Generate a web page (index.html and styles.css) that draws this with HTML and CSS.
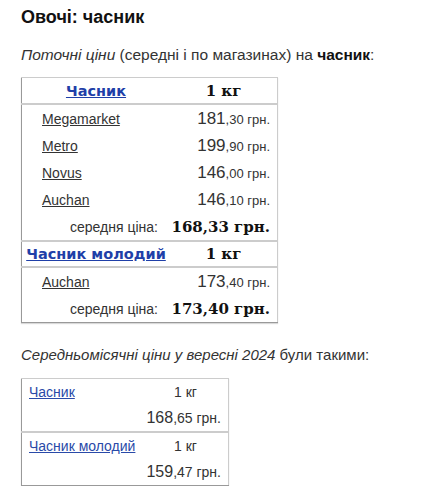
FILE: index.html
```html
<!DOCTYPE html>
<html lang="uk">
<head>
<meta charset="utf-8">
<link rel="stylesheet" href="styles.css">
</head>
<body>
<div class="page">
  <h1 class="title">Овочі: часник</h1>
  <p class="intro"><em>Поточні ціни</em> (середні і по магазинах) на <strong>часник</strong>:</p>
  <table class="prices">
    <tbody>
      <tr class="group">
        <th class="g-name"><a href="#">Часник</a></th>
        <th class="g-unit">1 кг</th>
      </tr>
      <tr class="shop"><td class="s-name"><a href="#">Megamarket</a></td><td class="s-price"><span class="int">181</span>,30 грн.</td></tr>
      <tr class="shop"><td class="s-name"><a href="#">Metro</a></td><td class="s-price"><span class="int">199</span>,90 грн.</td></tr>
      <tr class="shop"><td class="s-name"><a href="#">Novus</a></td><td class="s-price"><span class="int">146</span>,00 грн.</td></tr>
      <tr class="shop"><td class="s-name"><a href="#">Auchan</a></td><td class="s-price"><span class="int">146</span>,10 грн.</td></tr>
      <tr class="avg"><td class="a-label">середня ціна:</td><td class="a-price">168,33 грн.</td></tr>
      <tr class="group sep">
        <th class="g-name"><a href="#">Часник молодий</a></th>
        <th class="g-unit">1 кг</th>
      </tr>
      <tr class="shop"><td class="s-name"><a href="#">Auchan</a></td><td class="s-price"><span class="int">173</span>,40 грн.</td></tr>
      <tr class="avg"><td class="a-label">середня ціна:</td><td class="a-price">173,40 грн.</td></tr>
    </tbody>
  </table>
  <p class="intro second"><em>Середньомісячні ціни у вересні 2024</em> були такими:</p>
  <table class="monthly">
    <tbody>
      <tr class="m-top"><td class="m-name"><a href="#">Часник</a></td><td class="m-unit">1 кг</td></tr>
      <tr class="m-bottom"><td></td><td class="m-price"><span class="int">168</span>,65 грн.</td></tr>
      <tr class="m-top sep"><td class="m-name"><a href="#">Часник молодий</a></td><td class="m-unit">1 кг</td></tr>
      <tr class="m-bottom"><td></td><td class="m-price"><span class="int">159</span>,47 грн.</td></tr>
    </tbody>
  </table>
</div>
</body>
</html>
```
FILE: styles.css
```css
html, body {
  margin: 0;
  padding: 0;
  background: #fff;
}
.page {
  padding: 6px 21px 0 21px;
  font-family: "Liberation Sans", Arial, sans-serif;
  color: #333;
}
.title {
  margin: 0;
  font-size: 18px;
  line-height: 22px;
  font-weight: bold;
  color: #111;
}
.intro {
  margin: 17px 0 12px 0;
  font-size: 15.5px;
  line-height: 20px;
  color: #333;
  white-space: nowrap;
}
.intro strong {
  color: #111;
}
.intro.second {
  margin: 22px 0 13px 0;
  font-size: 15px;
}
table {
  border-collapse: collapse;
  border-top: 1px solid #ccc;
  border-right: 1px solid #ccc;
  border-left: 1px solid #999;
  border-bottom: 1px solid #999;
  box-shadow: 0 1px 1px rgba(0,0,0,0.15);
}
td, th {
  padding: 0;
  white-space: nowrap;
}
a {
  color: #333;
}
.prices {
  width: 257px;
}
.prices .group th {
  height: 25px;
  border-bottom: 2px solid #ccc;
}
.prices .group.sep th {
  border-top: 2px solid #ccc;
  height: 24px;
}
.g-name {
  width: 148px;
  text-align: center;
  font-family: "DejaVu Sans", Verdana, sans-serif;
  font-size: 14.5px;
  font-weight: bold;
}
.g-name a {
  color: #1f3fa8;
}
.g-unit {
  text-align: center;
  font-family: "DejaVu Serif", Georgia, serif;
  font-size: 15px;
  font-weight: bold;
  color: #111;
}
.shop td, .avg td {
  height: 27px;
}
.s-name {
  padding-left: 20px !important;
  font-size: 14px;
}
.s-price {
  text-align: right;
  padding-right: 7px !important;
  font-size: 13px;
  color: #333;
}
.int {
  font-size: 17px;
}
.a-label {
  text-align: right;
  padding-right: 12px !important;
  font-size: 14px;
}
.a-price {
  text-align: right;
  padding-right: 7px !important;
  font-family: "DejaVu Serif", Georgia, serif;
  font-weight: bold;
  font-size: 15px;
  color: #111;
}
.monthly {
  width: 208px;
}
.monthly td {
  height: 26px;
  font-size: 14px;
}
.monthly .sep td {
  border-top: 2px solid #ccc;
}
.m-name {
  padding-left: 7px !important;
  width: 114px;
}
.m-name a {
  color: #2a4aa8;
}
.m-unit {
  text-align: center;
  color: #333;
}
.m-price {
  text-align: right;
  padding-right: 7px !important;
  font-size: 13px;
}
.m-price .int {
  font-size: 16px;
}
```
